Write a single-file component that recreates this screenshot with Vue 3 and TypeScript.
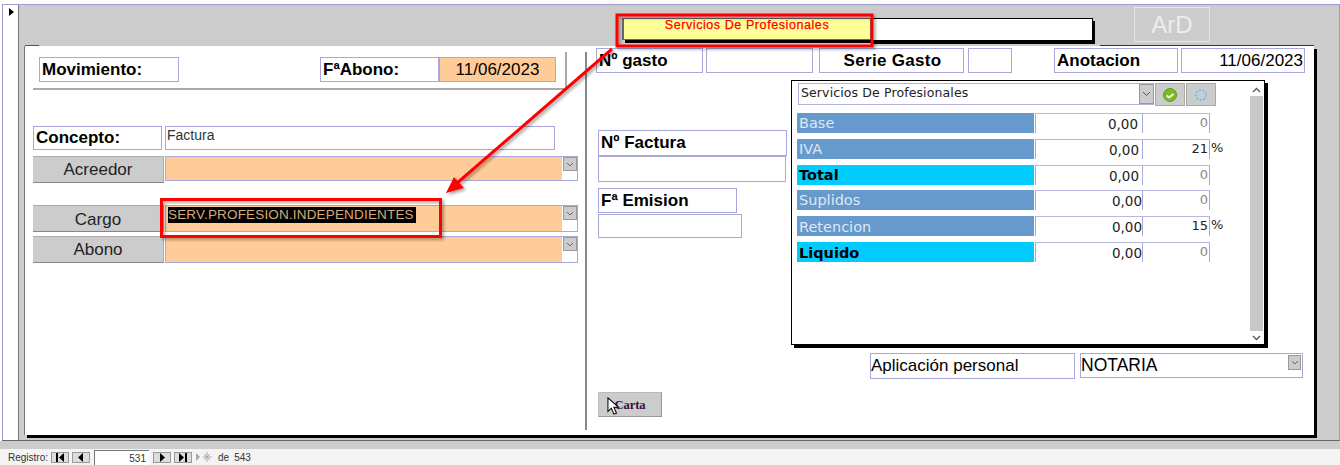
<script setup lang="ts">
interface Row { label: string; amount: string; pct: string; kind: string; pad: string; sign?: boolean }
const rows: Row[] = [
  { label: 'Base', amount: '0,00', pct: '0', kind: 'blue', pad: 'p4' },
  { label: 'IVA', amount: '0,00', pct: '21', kind: 'blue', pad: 'p3', sign: true },
  { label: 'Total', amount: '0,00', pct: '0', kind: 'cyan', pad: 'p3' },
  { label: 'Suplidos', amount: '0,00', pct: '0', kind: 'blue', pad: 'p0' },
  { label: 'Retencion', amount: '0,00', pct: '15', kind: 'blue', pad: 'p0', sign: true },
  { label: 'Liquido', amount: '0,00', pct: '0', kind: 'cyan', pad: 'p0' },
]
</script>

<template>
  <div class="app">
    <div class="main">
      <div class="selector"><span class="sel-mark"></span></div>
      <div class="canvas">
        <div class="head">
          <div class="title-yellow">Servicios De Profesionales</div>
          <div class="title-white"></div>
          <div class="ard">ArD</div>
        </div>
        <div class="panel">
          <section class="left">
            <div class="move-row">
              <div class="box lbl w-mov">Movimiento:</div>
              <div class="box lbl w-fab">FªAbono:</div>
              <div class="box date-orange">11/06/2023</div>
            </div>
            <div class="line concept">
              <div class="box lbl w-con">Concepto:</div>
              <div class="box factura">Factura</div>
            </div>
            <div class="line acre">
              <div class="gbtn">Acreedor</div>
              <div class="combo short"><div class="fill"></div><div class="side"><span class="drop"><svg width="8" height="5" viewBox="0 0 8 5"><path d="M1 1l3 3 3-3" fill="none" stroke="#666" /></svg></span></div></div>
            </div>
            <div class="line cargo">
              <div class="gbtn">Cargo</div>
              <div class="combo"><div class="fill"><span class="sel-text">SERV.PROFESION.INDEPENDIENTES</span></div><div class="side"><span class="drop"><svg width="8" height="5" viewBox="0 0 8 5"><path d="M1 1l3 3 3-3" fill="none" stroke="#666" /></svg></span></div></div>
            </div>
            <div class="line abono">
              <div class="gbtn">Abono</div>
              <div class="combo"><div class="fill"></div><div class="side"><span class="drop"><svg width="8" height="5" viewBox="0 0 8 5"><path d="M1 1l3 3 3-3" fill="none" stroke="#666" /></svg></span></div></div>
            </div>
          </section>
          <div class="vr"></div>
          <section class="right">
            <div class="top-row">
              <div class="box lbl w-gas">Nº gasto</div>
              <div class="box w-gasv"></div>
              <div class="box lbl center w-ser">Serie Gasto</div>
              <div class="box w-serv"></div>
              <div class="box lbl w-ano">Anotacion</div>
              <div class="box date-plain">11/06/2023</div>
            </div>
            <div class="body">
              <div class="col-a">
                <div class="box lbl w-fac">Nº Factura</div>
                <div class="box w-facv"></div>
                <div class="box lbl w-emi">Fª Emision</div>
                <div class="box w-emiv"></div>
                <div class="carta">Carta
                  <svg class="cursor" width="13" height="18" viewBox="0 0 15 21"><path d="M1 1v16l4-4 3 7 3-1-3-7h5.500z" fill="#fff" stroke="#000" stroke-width="1.200" /></svg>
                </div>
              </div>
              <div class="col-b">
                <div class="sub">
                  <div class="sub-main">
                    <div class="sub-top">
                      <div class="sub-combo">
                        <span class="sub-text">Servicios De Profesionales</span>
                        <span class="sub-drop"><svg width="9" height="6" viewBox="0 0 9 6"><path d="M1 1l3.500 3.500L8 1" fill="none" stroke="#555" /></svg></span>
                      </div>
                      <div class="ibtn">
                        <svg width="16" height="16" viewBox="0 0 16 16"><circle cx="8" cy="8" r="6.500" fill="#7cb928" stroke="#5d9a1c" /><path d="M4.500 8.500l2.500 2 4.500-3.500" fill="none" stroke="#eef8d8" stroke-width="2" /></svg>
                      </div>
                      <div class="ibtn">
                        <svg width="16" height="16" viewBox="0 0 16 16"><circle cx="8" cy="8" r="5" fill="#b4d6e2" stroke="#93b7cc" stroke-width="2" stroke-dasharray="2 1.500" /><circle cx="8" cy="8" r="2" fill="#cfc8dc" /></svg>
                      </div>
                    </div>
                    <div class="rows">
                      <div v-for="r in rows" :key="r.label" class="row">
                        <div class="r-label" :class="r.kind">{{ r.label }}</div>
                        <div class="r-amt" :class="r.pad">{{ r.amount }}</div>
                        <div class="r-pct" :class="{ dark: r.sign }">{{ r.pct }}</div>
                        <span v-if="r.sign" class="r-sign">%</span>
                      </div>
                    </div>
                  </div>
                  <div class="scroll">
                    <div class="sc-btn"><svg width="9" height="6" viewBox="0 0 9 6"><path d="M1 5l3.500-3.500L8 5" fill="none" stroke="#555" stroke-width="1.300" /></svg></div>
                    <div class="sc-track"></div>
                    <div class="sc-btn"><svg width="9" height="6" viewBox="0 0 9 6"><path d="M1 1l3.500 3.500L8 1" fill="none" stroke="#555" stroke-width="1.300" /></svg></div>
                  </div>
                </div>
                <div class="apl-row">
                  <div class="box apl">Aplicación personal</div>
                  <div class="box notaria">NOTARIA<span class="not-drop"><svg width="8" height="5" viewBox="0 0 8 5"><path d="M1 1l3 3 3-3" fill="none" stroke="#666" /></svg></span></div>
                </div>
              </div>
            </div>
          </section>
        </div>
      </div>
    </div>
    <div class="band"></div>
    <div class="nav">
      <span class="reg">Registro:</span>
      <span class="nbtn"><svg width="10" height="9" viewBox="0 0 10 9"><path d="M1 0h2v9H1zM9 0v9L4 4.500z" /></svg></span>
      <span class="nbtn"><svg width="10" height="9" viewBox="0 0 10 9"><path d="M7 0v9L2 4.500z" /></svg></span>
      <span class="ninput">531</span>
      <span class="nbtn"><svg width="10" height="9" viewBox="0 0 10 9"><path d="M3 0v9l5-4.500z" /></svg></span>
      <span class="nbtn"><svg width="10" height="9" viewBox="0 0 10 9"><path d="M1 0v9l5-4.500zM7 0h2v9H7z" /></svg></span>
      <span class="nnew"><svg width="18" height="10" viewBox="0 0 18 10"><path d="M1 1v8l4-4z" fill="#aaa" /><path d="M12 0v10M7.500 5h9M9 2l6 6M15 2l-6 6" stroke="#aaa" fill="none" /></svg></span>
      <span class="de">de</span><span class="tot">543</span>
    </div>

    <svg class="annot" width="1340" height="465" viewBox="0 0 1340 465">
      <defs>
        <filter id="sh" x="-10%" y="-10%" width="120%" height="120%">
          <feDropShadow dx="2" dy="2" stdDeviation="1.500" flood-color="#000" flood-opacity=".35" />
        </filter>
      </defs>
      <g filter="url(#sh)" fill="none" stroke="#f00">
        <rect x="617" y="15" width="255" height="31" stroke-width="3" />
        <rect x="161.500" y="199.500" width="279" height="37" stroke-width="3" />
        <path d="M612 49L456 184" stroke-width="3" />
        <path d="M446 193l8-16 10 11z" fill="#f00" stroke="none" />
      </g>
    </svg>
  </div>
</template>

<style>
html, body { margin: 0; background: #fff; }
</style>

<style scoped>
.app { position: relative; width: 1340px; height: 465px; overflow: hidden; display: flex; flex-direction: column; background: #fff; font-family: "Liberation Sans", Arial, sans-serif; color: #000; }
.main { margin: 4px 0 0 2px; height: 437px; display: flex; box-sizing: border-box; border-top: 1px solid #9c9ccf; border-bottom: 1px solid #666; border-right: 1px solid #9c9ccf; flex: none; }
.selector { width: 15px; border-left: 1px solid #9c9ccf; border-right: 1px solid #777; background: #fff; flex: none; box-sizing: content-box; }
.sel-mark { display: block; width: 0; height: 0; margin: 3px 0 0 6px; border-left: 5px solid #000; border-top: 4px solid transparent; border-bottom: 4px solid transparent; }
.canvas { flex: 1; background: #ccc; display: flex; flex-direction: column; min-width: 0; }
.head { height: 41px; display: flex; align-items: flex-start; flex: none; position: relative; z-index: 2; }
.title-yellow { margin: 13px 0 0 603px; width: 249px; height: 22px; box-sizing: border-box; background: #ffff99; border: 1px solid #666; border-left-width: 2px; color: #f00; font-size: 12.500px; letter-spacing: .58px; -webkit-text-stroke: .25px #f00; text-align: center; white-space: nowrap; line-height: 12px; box-shadow: 3px 3px 0 #000; }
.title-white { margin: 13px 0 0 0; width: 222px; height: 23px; box-sizing: border-box; background: #fff; border: 1px solid #000; box-shadow: 2px 3px 0 #000; }
.ard { margin: 2px 0 0 41px; width: 76px; height: 35px; box-sizing: border-box; border: 1px solid #e6e6e6; color: #eee; font-size: 24px; line-height: 33px; text-align: center; }

.panel { position: relative; margin-left: 5px; width: 1290px; height: 389px; flex: none; box-sizing: border-box; background: #fff; border-left: 1px solid #777; box-shadow: 3px 3px 0 #000; display: flex; }
.panel::before { content: ""; position: absolute; left: 0; top: -1px; width: 14px; height: 1px; background: #555; }
.panel::after { content: ""; position: absolute; right: 0; top: -1px; width: 214px; height: 1px; background: #333; }

.box { box-sizing: border-box; border: 1px solid #a8a8dc; background: #fff; flex: none; font-size: 17px; }
.lbl { font-weight: 700; padding-left: 2px; display: flex; align-items: center; }
.center { justify-content: center; }

.left { width: 560px; flex: none; padding: 6px 0 0 8px; box-sizing: border-box; }
.move-row { width: 534px; height: 38px; box-sizing: border-box; border-bottom: 2px solid #aaa; border-right: 2px solid #aaa; padding: 5px 0 0 6px; display: flex; align-items: flex-start; }
.w-mov { width: 140px; height: 25px; }
.w-fab { width: 119px; height: 25px; margin-left: 141px; }
.date-orange { width: 117px; height: 25px; background: #ffcc99; text-align: center; line-height: 23px; }
.line { display: flex; align-items: flex-start; }
.concept { margin-top: 36px; }
.w-con { width: 129px; height: 24px; }
.factura { width: 390px; height: 24px; margin-left: 3px; font-size: 14px; color: #333; padding: 0 0 0 1px; line-height: 17px; }
.acre { margin-top: 6px; }
.cargo { margin-top: 22px; }
.abono { margin-top: 4px; }
.gbtn { width: 131px; height: 27px; box-sizing: border-box; background: #ccc; border-bottom: 1px solid #888; border-right: 1px solid #aaa; border-top: 1px solid #aaa; text-align: center; font-size: 17px; line-height: 26px; flex: none; color: #222; }
.cargo .gbtn { line-height: 27px; }
.combo { margin-left: 1px; width: 413px; height: 27px; box-sizing: border-box; border: 1px solid #a8a8dc; display: flex; flex: none; background: #fff; }
.combo.short { height: 25px; }
.fill { flex: 1; background: #ffcc99; padding: 1px 0 0 2px; font-size: 13.500px; line-height: 16px; }
.sel-text { background: #000; color: #d6aa78; display: inline-block; line-height: 16px; width: 248px; letter-spacing: .17px; white-space: nowrap; }
.side { width: 15px; flex: none; background: #fff; }
.drop { display: flex; align-items: center; justify-content: center; width: 14px; height: 14px; box-sizing: border-box; background: #ccc; border: 1px solid #999; margin-left: 1px; }

.vr { width: 2px; margin: 6px 0 5px 0; background: #888; flex: none; }

.right { flex: 1; min-width: 0; padding: 2px 0 0 9px; box-sizing: border-box; }
.top-row { display: flex; align-items: flex-start; height: 25px; }
.top-row .box { height: 25px; }
.w-gas { width: 107px; }
.w-gasv { width: 107px; margin-left: 3px; }
.w-ser { width: 145px; margin-left: 6px; letter-spacing: .3px; }
.w-serv { width: 44px; margin-left: 4px; }
.w-ano { width: 124px; margin-left: 42px; }
.date-plain { width: 124px; margin-left: 3px; text-align: right; line-height: 23px; padding-right: 1px; }
.body { display: flex; align-items: flex-start; margin-top: 7px; }
.col-a { width: 195px; padding-left: 2px; box-sizing: border-box; flex: none; display: flex; flex-direction: column; align-items: flex-start; }
.w-fac { width: 189px; height: 26px; margin-top: 50px; }
.w-facv { width: 188px; height: 26px; }
.w-emi { width: 139px; height: 25px; margin-top: 6px; }
.w-emiv { width: 144px; height: 24px; margin-top: 1px; }
.carta { position: relative; width: 64px; height: 25px; margin-top: 154px; box-sizing: border-box; background: #ccc; border: 1px solid #bbb; border-bottom-color: #999; border-right-color: #999; font: 700 12.500px/24px "Liberation Serif", serif; color: #301040; text-align: center; }
.cursor { position: absolute; left: 8px; top: 4px; }

.col-b { width: 520px; flex: none; }
.sub { width: 474px; height: 265px; box-sizing: border-box; border: 1px solid #000; box-shadow: 3px 3px 0 #000; background: #fff; display: flex; }
.sub-main { flex: 1; min-width: 0; }
.sub-top { display: flex; align-items: flex-start; margin: 2px 0 0 6px; }
.sub-combo { width: 356px; height: 22px; box-sizing: border-box; border: 1px solid #b0b0dc; border-right: 0; display: flex; justify-content: space-between; font: 12.500px/17px "DejaVu Sans", sans-serif; color: #222; padding-left: 2px; }
.sub-text { white-space: nowrap; letter-spacing: .12px; }
.sub-drop { width: 15px; height: 20px; background: #ccc; border: 1px solid #999; box-sizing: border-box; display: flex; align-items: center; justify-content: center; }
.ibtn { width: 30px; height: 23px; margin-left: 1px; box-sizing: border-box; background: #ccc; border: 1px solid #aaa; display: flex; align-items: center; justify-content: center; }
.rows { margin: 7px 0 0 5px; display: flex; flex-direction: column; gap: 6px; }
.row { display: flex; height: 20px; align-items: stretch; font: 14.500px/20px "DejaVu Sans", sans-serif; }
.row:nth-child(4) { margin-top: -1px; }
.r-label { width: 237px; box-sizing: border-box; padding-left: 2px; flex: none; }
.row:nth-child(n+5) .r-label { line-height: 22px; }
.blue { background: #6699cc; color: #dfe8f4; }
.cyan { background: #00ccff; color: #000; font-weight: 700; }
.r-amt { width: 107px; margin-left: 1px; box-sizing: border-box; border-left: 1px solid #a8a8dc; border-top: 1px solid #b8b8e0; text-align: right; font-size: 13.500px; line-height: 20px; flex: none; color: #222; }
.p4 { padding-right: 4px; }
.p3 { padding-right: 3px; }
.p0 { padding-right: 0; }
.r-pct { width: 68px; box-sizing: border-box; border-left: 1px solid #a8a8dc; border-right: 1px solid #a8a8dc; border-top: 1px solid #b8b8e0; text-align: right; padding-right: 1px; font-size: 13px; line-height: 18px; flex: none; color: #888; }
.r-pct.dark { color: #222; }
.r-sign { font-size: 13px; line-height: 18px; margin-left: 1px; color: #222; }

.scroll { width: 13px; flex: none; margin: 2px 1px 0 0; display: flex; flex-direction: column; }
.sc-btn { height: 13px; display: flex; align-items: center; justify-content: center; flex: none; }
.sc-track { flex: 1; background: #c8c8c8; }

.apl-row { display: flex; margin: 8px 0 0 79px; }
.apl { width: 205px; height: 26px; line-height: 24px; padding-left: 0; }
.notaria { position: relative; width: 223px; height: 25px; margin-left: 5px; font-size: 17.500px; line-height: 23px; padding-left: 0; }
.not-drop { position: absolute; right: 1px; top: 1px; width: 13px; height: 15px; background: #ccc; border: 1px solid #999; box-sizing: border-box; display: flex; align-items: center; justify-content: center; }

.band { height: 8px; background: #ccc; flex: none; }
.nav { flex: 1; background: #f4f4f4; display: flex; align-items: center; padding-left: 8px; font-size: 10px; color: #333; }
.reg { width: 43px; flex: none; }
.nbtn { width: 18px; height: 11px; box-sizing: border-box; background: #ddd; border: 1px solid #999; display: flex; align-items: center; justify-content: center; margin-right: 3px; flex: none; }
.nbtn svg { fill: #000; }
.ninput { width: 55px; height: 15px; box-sizing: border-box; margin: 1px 4px 0 1px; background: #fff; border-top: 1px solid #777; border-left: 1px solid #777; text-align: right; padding-right: 3px; line-height: 15px; flex: none; }
.nnew { width: 18px; margin-right: 5px; display: flex; flex: none; }
.de { margin-right: 5px; }

.annot { position: absolute; left: 0; top: 0; pointer-events: none; z-index: 5; }
</style>
